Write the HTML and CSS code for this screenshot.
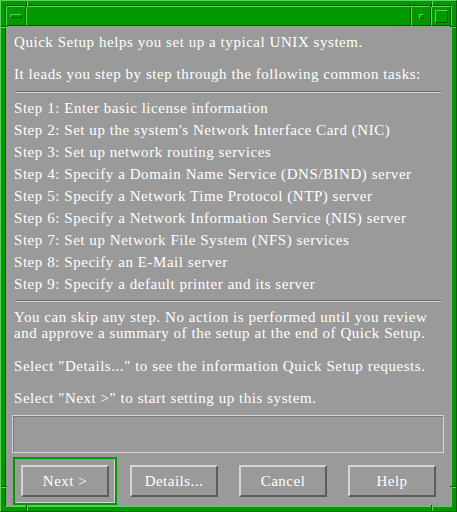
FILE: index.html
```html
<!DOCTYPE html>
<html lang="en">
<head>
  <meta charset="UTF-8" />
  <title>Quick Setup</title>
  <link rel="stylesheet" href="styles.css">
</head>
<body>
  <div class="window">
    <!-- resize handle marks on the frame -->
    <span class="notch v" style="left:25px;top:0"></span>
    <span class="notch v" style="left:430px;top:0"></span>
    <span class="notch v" style="left:25px;bottom:0"></span>
    <span class="notch v" style="left:430px;bottom:0"></span>
    <span class="notch h" style="left:0;top:25px"></span>
    <span class="notch h" style="right:0;top:25px"></span>
    <span class="notch h" style="left:0;top:485px"></span>
    <span class="notch h" style="right:0;top:485px"></span>

    <div class="frame">
      <div class="titlebar">
        <div class="tbtn"><span class="menu-bar"></span></div>
        <div class="title"></div>
        <div class="tbtn"><span class="min-dot"></span></div>
        <div class="tbtn"><span class="max-box"></span></div>
      </div>

      <main class="content">
        <p class="line first">Quick Setup helps you set up a typical UNIX system.</p>
        <p class="line second">It leads you step by step through the following common tasks:</p>
        <div class="sep top-sep"></div>

        <ul class="steps">
          <li>Step 1: Enter basic license information</li>
          <li>Step 2: Set up the system's Network Interface Card (NIC)</li>
          <li>Step 3: Set up network routing services</li>
          <li>Step 4: Specify a Domain Name Service (DNS/BIND) server</li>
          <li>Step 5: Specify a Network Time Protocol (NTP) server</li>
          <li>Step 6: Specify a Network Information Service (NIS) server</li>
          <li>Step 7: Set up Network File System (NFS) services</li>
          <li>Step 8: Specify an E-Mail server</li>
          <li>Step 9: Specify a default printer and its server</li>
        </ul>
        <div class="sep bottom-sep"></div>

        <p class="note">You can skip any step. No action is performed until you review<br>and approve a summary of the setup at the end of Quick Setup.</p>
        <p class="note sel-details">Select "Details..." to see the information Quick Setup requests.</p>
        <p class="note sel-next">Select "Next &gt;" to start setting up this system.</p>

        <div class="msgbox"></div>

        <div class="buttons">
          <div class="default-ring">
            <div class="ring-inner">
              <button class="btn">Next &gt;</button>
            </div>
          </div>
          <button class="btn spaced first-plain">Details...</button>
          <button class="btn spaced">Cancel</button>
          <button class="btn spaced">Help</button>
        </div>
      </main>
    </div>
  </div>
</body>
</html>
```

FILE: styles.css
```css
* {
  box-sizing: border-box;
}

body {
  margin: 0;
  background: #9a9a9a;
}

.window {
  position: relative;
  width: 457px;
  height: 512px;
  background: #009a00;
  border-top: 1px solid #5fcf5f;
  border-left: 1px solid #5fcf5f;
  border-right: 1px solid #005a00;
  border-bottom: 1px solid #005a00;
  padding: 4px;
}

.notch {
  position: absolute;
}

.notch.v {
  width: 2px;
  height: 6px;
  border-left: 1px solid #005a00;
  border-right: 1px solid #5fcf5f;
}

.notch.h {
  width: 6px;
  height: 2px;
  border-top: 1px solid #005a00;
  border-bottom: 1px solid #5fcf5f;
}

.frame {
  height: 100%;
  border-top: 1px solid #005a00;
  border-left: 1px solid #005a00;
  border-right: 1px solid #5fcf5f;
  border-bottom: 1px solid #5fcf5f;
  display: flex;
  flex-direction: column;
}

/* title bar */
.titlebar {
  display: flex;
  height: 20px;
  flex-shrink: 0;
}

.tbtn,
.title {
  height: 20px;
  background: #009a00;
  border-top: 1px solid #5fcf5f;
  border-left: 1px solid #5fcf5f;
  border-right: 1px solid #005a00;
  border-bottom: 1px solid #005a00;
  display: flex;
  align-items: center;
  justify-content: center;
}

.tbtn {
  width: 20px;
}

.title {
  flex: 1;
}

.menu-bar {
  width: 12px;
  height: 4px;
  border-top: 1px solid #5fcf5f;
  border-left: 1px solid #5fcf5f;
  border-right: 1px solid #005a00;
  border-bottom: 1px solid #005a00;
}

.min-dot {
  width: 5px;
  height: 5px;
  border-top: 1px solid #5fcf5f;
  border-left: 1px solid #5fcf5f;
  border-right: 1px solid #005a00;
  border-bottom: 1px solid #005a00;
}

.max-box {
  width: 13px;
  height: 13px;
  border-top: 1px solid #5fcf5f;
  border-left: 1px solid #5fcf5f;
  border-right: 1px solid #005a00;
  border-bottom: 1px solid #005a00;
}

/* dialog body */
.content {
  flex: 1;
  background: #9a9a9a;
  color: #ffffff;
  font-family: "Liberation Serif", serif;
  font-size: 15px;
  letter-spacing: 0.55px;
  padding-top: 5px;
}

p {
  margin: 0;
}

.line {
  line-height: 22px;
  margin-left: 8px;
}

.line.second {
  margin-top: 10px;
}

.sep {
  height: 2px;
  margin: 0 10px;
  border-top: 1px solid #6c6c6c;
  border-bottom: 1px solid #d4d4d4;
}

.top-sep {
  margin-top: 6px;
}

.steps {
  list-style: none;
  margin: 4px 0 0 8px;
  padding: 0;
}

.steps li {
  line-height: 22px;
  white-space: nowrap;
}

.bottom-sep {
  margin-top: 5px;
}

.note {
  line-height: 16px;
  margin: 7px 0 0 8px;
  white-space: nowrap;
}

.sel-details {
  margin-top: 17px;
}

.sel-next {
  margin-top: 16px;
}

.msgbox {
  height: 38px;
  margin: 9px 7px 0 6px;
  border: 1px solid #d4d4d4;
  box-shadow: inset 1px 1px 0 #7a7a7a;
}

/* buttons */
.buttons {
  display: flex;
  align-items: flex-start;
  margin-top: 4px;
  padding-left: 7px;
}

.default-ring {
  border: 2px solid #009a00;
}

.ring-inner {
  padding: 5px;
  border-top: 1px solid #9a9a9a;
  border-left: 1px solid #9a9a9a;
  border-right: 1px solid #d4d4d4;
  border-bottom: 1px solid #d4d4d4;
}

.btn {
  display: block;
  width: 88px;
  height: 32px;
  padding: 0;
  background: #9a9a9a;
  color: #ffffff;
  font-family: "Liberation Serif", serif;
  font-size: 15px;
  letter-spacing: 0.5px;
  border-top: 2px solid #d4d4d4;
  border-left: 2px solid #d4d4d4;
  border-right: 2px solid #5c5c5c;
  border-bottom: 2px solid #5c5c5c;
}

.btn.spaced {
  margin-top: 8px;
  margin-left: 21px;
}

.btn.first-plain {
  margin-left: 13px;
}
```
